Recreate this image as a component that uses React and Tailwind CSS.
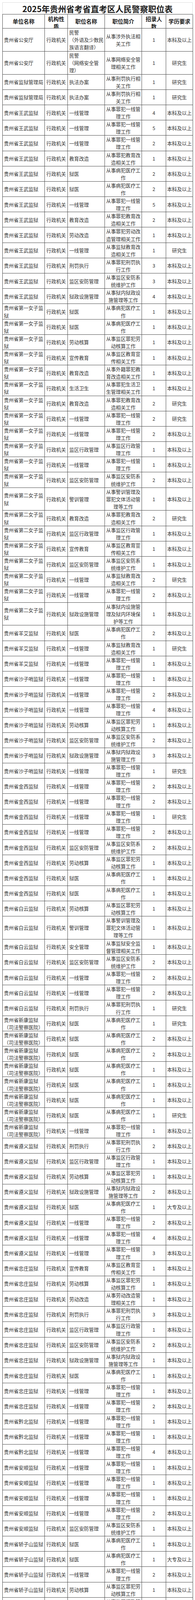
import React from "react";

const GA = "贵州省公安厅", JY = "贵州省监狱管理局", WW = "贵州省王武监狱", N1 = "贵州省第一女子监狱", N2 = "贵州省第二女子监狱",
  YA = "贵州省羊艾监狱", SZ = "贵州省沙子哨监狱", JX = "贵州省金西监狱", BY = "贵州省白云监狱", XK = "贵州省新康监狱（司法警察医院）",
  ZY = "贵州省遵义监狱", ZZ = "贵州省忠庄监狱", QB = "贵州省黔北监狱", AS = "贵州省安顺监狱", JZ = "贵州省轿子山监狱",
  PD = "贵州省普定监狱", PB = "贵州省平坝监狱";

const a = "从事罪犯一线管理工作", b = "从事病犯医疗工作", c = "从事罪犯教育改造相关工作", d = "从事监区安防系统维护工作",
  e = "从事监区罪犯劳动核算工作", f = "从事监区行政管理工作", g = "从事监区教育宣传相关工作", h = "从事监狱教育改造相关工作",
  i = "从事罪犯刑罚执行工作", j = "从事狱内狱政设施管理等工作", k = "从事警训管理及罪犯文体活动管理等工作", l = "从事劳动改造管理相关工作";

const B = "本科及以上", Y = "研究生", D = "大专及以上";

const rows = [
  [GA, "民警|（外语及少数民族语言翻译）", "从事涉外执法相关工作", 1, B],
  [GA, "民警|（网络安全管理）", "从事网络安全管理相关工作", 1, Y],
  [JY, "执法办案", "从事刑罚执行相关工作", 1, Y],
  [JY, "执法办案", "从事刑罚执行相关工作", 1, Y],
  [WW, "一线管理", a, 4, B],
  [WW, "一线管理", a, 5, B],
  [WW, "一线管理", a, 2, B],
  [WW, "教育改造", c, 1, B],
  [WW, "狱医", b, 2, B],
  [WW, "狱医", b, 2, B],
  [WW, "一线管理", a, 5, B],
  [WW, "教育改造", c, 2, B],
  [WW, "劳动改造", "从事罪犯劳动改造管理相关工作", 1, B],
  [WW, "一线管理", h, 1, Y],
  [WW, "刑罚执行", i, 3, B],
  [WW, "监区安防管理", d, 3, B],
  [WW, "狱政设施管理", j, 4, B],
  [N1, "狱医", b, 1, B],
  [N1, "狱医", b, 1, B],
  [N1, "劳动核算", e, 1, B],
  [N1, "宣传教育", g, 1, B],
  [N1, "教育改造", "从事外籍罪犯教育改造相关工作", 1, B],
  [N1, "生活卫生", "从事罪犯生活卫生管理相关工作", 1, B],
  [N1, "教育改造", c, 2, Y],
  [N1, "一线管理", a, 2, Y],
  [N1, "一线管理", a, 2, B],
  [N1, "监区行政管理", f, 1, B],
  [N1, "一线管理", a, 1, B],
  [N1, "监区安防管理", d, 2, B],
  [N2, "警训管理", k, 1, B],
  [N2, "教育改造", c, 2, Y],
  [N2, "监区行政管理", f, 1, B],
  [N2, "宣传教育", g, 1, B],
  [N2, "监区安防管理", d, 1, B],
  [N2, "一线管理", h, 2, Y],
  [N2, "一线管理", a, 2, B],
  [N2, "狱政设施管理", "从事狱内设施管理及狱内环境保护等工作", 1, B],
  [YA, "狱医", b, 2, B],
  [YA, "一线管理", h, 1, Y],
  [YA, "一线管理", a, 1, B],
  [SZ, "一线管理", a, 1, B],
  [SZ, "一线管理", a, 2, B],
  [SZ, "一线管理", a, 4, B],
  [SZ, "劳动核算", e, 1, B],
  [SZ, "监区安防管理", d, 2, B],
  [SZ, "狱政设施管理", "从事狱内狱政设施管理工作", 3, B],
  [SZ, "一线管理", a, 1, Y],
  [JX, "一线管理", a, 2, B],
  [JX, "一线管理", a, 2, B],
  [JX, "一线管理", a, 1, Y],
  [JX, "一线管理", a, 2, B],
  [JX, "监区安防管理", d, 2, B],
  [JX, "劳动核算", e, 1, B],
  [JX, "狱医", b, 1, B],
  [JX, "狱医", b, 1, B],
  [BY, "劳动核算", e, 1, B],
  [BY, "警训管理", k, 1, B],
  [BY, "安全管理", "从事监狱安全监督管理相关工作", 1, B],
  [BY, "监区安防管理", d, 2, B],
  [BY, "一线管理", a, 2, B],
  [BY, "一线管理", a, 2, B],
  [BY, "刑罚执行", i, 1, Y],
  [XK, "狱医", b, 1, Y],
  [XK, "狱医", b, 2, B],
  [XK, "狱医", b, 2, B],
  [XK, "狱医", b, 1, B],
  [XK, "狱医", b, 1, B],
  [XK, "狱医", b, 1, B],
  [XK, "狱医", b, 1, Y],
  [XK, "一线管理", a, 1, B],
  [ZY, "刑罚执行", i, 2, B],
  [ZY, "监区行政管理", f, 1, B],
  [ZY, "劳动核算", e, 1, B],
  [ZY, "狱政设施管理", j, 2, B],
  [ZY, "狱医", b, 1, D],
  [ZY, "一线管理", a, 2, B],
  [ZY, "一线管理", a, 4, B],
  [ZY, "一线管理", a, 3, B],
  [ZZ, "宣传教育", g, 1, B],
  [ZZ, "劳动核算", e, 1, B],
  [ZZ, "劳动改造", l, 1, B],
  [ZZ, "刑罚执行", i, 3, B],
  [ZZ, "监区行政管理", f, 1, B],
  [ZZ, "监区安防管理", d, 2, B],
  [ZZ, "狱政设施管理", j, 1, B],
  [ZZ, "狱医", b, 1, B],
  [ZZ, "一线管理", a, 1, B],
  [ZZ, "一线管理", a, 2, B],
  [QB, "一线管理", a, 1, B],
  [QB, "一线管理", a, 1, B],
  [QB, "一线管理", a, 4, B],
  [AS, "一线管理", a, 1, B],
  [AS, "一线管理", a, 1, B],
  [AS, "一线管理", a, 1, B],
  [AS, "一线管理", a, 2, B],
  [AS, "监区安防管理", d, 1, B],
  [JZ, "狱医", b, 1, B],
  [JZ, "狱医", b, 1, D],
  [JZ, "一线管理", a, 2, B],
  [JZ, "劳动核算", e, 1, B],
  [JZ, "监区行政管理", f, 1, B],
  [JZ, "监区安防管理", d, 1, B],
  [JZ, "一线管理", a, 2, B],
  [JZ, "宣传教育", g, 1, B],
  [JZ, "监区行政管理", f, 1, B],
  [JZ, "监区行政管理", f, 1, B],
  [JZ, "一线管理", a, 1, B],
  [JZ, "一线管理", a, 1, D],
  [JZ, "劳动改造", l, 1, B],
  [JZ, "警训管理", k, 1, B],
  [PD, "一线管理", a, 2, B],
  [PD, "一线管理", a, 2, B],
  [PD, "安全管理", "从事监狱安全管理相关工作", 1, B],
  [PD, "狱医", b, 3, B],
  [PD, "警训管理", k, 1, B],
  [PD, "监区行政管理", f, 1, B],
  [PD, "一线管理", a, 2, B],
  [PB, "一线管理", a, 3, B],
  [PB, "一线管理", a, 2, B],
  [PB, "教育改造", h, 1, B],
  [PB, "一线管理", a, 1, Y],
  [PB, "刑罚执行", i, 3, B],
];

const cell = "border-r border-b border-[#4a4a4a] flex items-center overflow-hidden";

function Row({ r }) {
  const [unit, pos, duty, num, edu] = r;
  const tall = duty.length > 14 || pos.includes("|");
  const h = tall ? "h-[58.8px]" : "h-[39.2px]";
  return (
    <div className={`grid grid-cols-[108px_59px_95px_95px_62px_69px] grid-rows-[100%] ${h}`}>
      <div className={`${cell} pl-[3px] pr-[2px]`}>
        <div>{unit}</div>
      </div>
      <div className={`${cell} justify-center`}>
        <div>行政机关</div>
      </div>
      <div className={`${cell} pl-[3.5px] pr-[2px]`}>
        <div>
          {pos.split("|").map((p, idx) => (
            <div key={idx}>{p}</div>
          ))}
        </div>
      </div>
      <div className={`${cell} justify-center px-[2px] text-center`}>
        <div>{duty}</div>
      </div>
      <div className={`${cell} justify-center`}>
        <div>{num}</div>
      </div>
      <div className={`${cell} justify-center`}>
        <div>{edu}</div>
      </div>
    </div>
  );
}

export default function App() {
  return (
    <div className="w-[500px] bg-white pt-[6px] pl-[6px] font-['Noto_Sans_CJK_SC','Noto_Sans',sans-serif]">
      <div className="w-[488px]">
        <div className="h-[30px] border-t border-l border-r border-[#dcdcdc] flex items-center justify-center text-[21px] font-bold text-[#1a1a1a] leading-[26px]">
          <span>2025年贵州省考省直考区人民警察职位表</span>
        </div>
        <div className="border-l border-t border-[#4a4a4a]">
          <div className="grid grid-cols-[108px_59px_95px_95px_62px_69px] grid-rows-[100%] h-[36px] text-[14px] font-bold text-[#1a1a1a] leading-[19px]">
            <div className={`${cell} justify-center`}>单位名称</div>
            <div className="border-r border-b border-[#4a4a4a] overflow-hidden text-center pt-[2px]">
              <div>机构性</div>
              <div>质</div>
            </div>
            <div className={`${cell} justify-center`}>职位名称</div>
            <div className={`${cell} justify-center`}>职位简介</div>
            <div className="border-r border-b border-[#4a4a4a] overflow-hidden text-center pt-[2px]">
              <div>招录人</div>
              <div>数</div>
            </div>
            <div className={`${cell} justify-center`}>学历要求</div>
          </div>
          <div className="text-[12.6px] leading-[19.1px] text-[#333333]">
            {rows.map((r, idx) => (
              <Row key={idx} r={r} />
            ))}
          </div>
        </div>
      </div>
    </div>
  );
}
